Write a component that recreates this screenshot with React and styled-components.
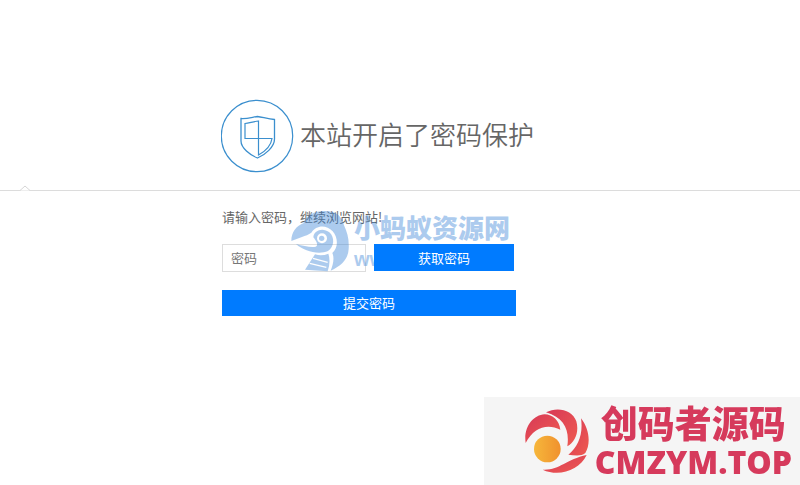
import React from "react";
import styled, { createGlobalStyle } from "styled-components";

const GlobalStyle = createGlobalStyle`
  * { box-sizing: border-box; }
  body {
    margin: 0;
    background: #fff;
    color: #666;
    font-family: "Noto Sans CJK SC", sans-serif;
    font-size: 13px;
  }
`;

const Page = styled.main`
  min-height: 100vh;
`;

const Header = styled.header`
  position: relative;
  padding: 99px 20px 17px;
  border-bottom: 1px solid #dcdcdc;
`;

const Notch = styled.svg`
  position: absolute;
  left: 20px;
  bottom: -1px;
  display: block;
`;

const Column = styled.div`
  width: 100%;
  max-width: 358px;
  margin: 0 auto;
`;

const Heading = styled(Column)`
  display: flex;
  align-items: center;
  gap: 6px;
`;

const Title = styled.h1`
  margin: 0;
  padding-bottom: 4px;
  color: #666;
  font-size: 26px;
  font-weight: 350;
  line-height: 40px;
  white-space: nowrap;
`;

const Body = styled.section`
  padding: 16px 20px;
`;

const Panel = styled(Column)`
  position: relative;
  padding-left: 1px;
`;

const Form = styled.form`
  max-width: 294px;
`;

const Prompt = styled.label`
  display: block;
  margin-bottom: 17px;
  line-height: 20px;
`;

const Row = styled.div`
  display: flex;
  gap: 8px;
  margin-bottom: 18px;
  padding-right: 2px;
`;

const PasswordInput = styled.input`
  flex: 1;
  min-width: 0;
  height: 28px;
  padding: 0 8px 2px;
  border: 1px solid #ddd;
  border-radius: 0;
  background: #fff;
  font: inherit;
  &::placeholder { color: #777; opacity: 1; }
`;

const Button = styled.button`
  position: relative;
  z-index: 2;
  width: ${({ $wide }) => ($wide ? "100%" : "140px")};
  height: ${({ $wide }) => ($wide ? "26px" : "27px")};
  padding: 0 0 1px;
  border: 0;
  background: #007bff;
  color: #fff;
  font: inherit;
  line-height: 25px;
`;

const Watermark = styled.div`
  position: absolute;
  z-index: 1;
  top: 1px;
  left: 69px;
  display: flex;
  gap: 4px;
  color: #3c86d8;
  opacity: 0.42;
  pointer-events: none;
`;

const WatermarkText = styled.div`
  font-size: 26px;
  font-weight: 900;
  line-height: 38px;
  white-space: nowrap;
`;

const WatermarkUrl = styled.div`
  font-family: "Liberation Sans", sans-serif;
  font-size: 20px;
  font-weight: 700;
  line-height: 26px;
`;

const Brand = styled.aside`
  position: fixed;
  right: 0;
  bottom: 0;
  display: flex;
  align-items: center;
  gap: 5px;
  padding: 4px 8px 4px 40px;
  background: #f5f5f5;
  color: #d63a5c;
  text-align: center;
  white-space: nowrap;
`;

const BrandName = styled.div`
  font-size: 37px;
  font-weight: 900;
  line-height: 42px;
`;

const BrandUrl = styled.div`
  font-family: "Open Sans", sans-serif;
  font-size: 32px;
  font-weight: 800;
  line-height: 38px;
`;

function ShieldIcon() {
  return (
    <svg width="73" height="74" viewBox="0 0 73 74" fill="none" stroke="#3b8fce" aria-hidden="true">
      <circle cx="36" cy="37" r="35.7" strokeWidth="1.2" />
      <path d="M20 19.500C26 20 32 18 36.500 17.500C41 18 47 20 53.500 20.500V40C53.500 48 44 56 36.500 59C29 56 20 49 20 42Z" strokeWidth="1.300" />
      <path d="M37.500 39.500V22C33 22.500 28 24 24 24.500V39.500H51C50 47 43 53 37.500 56V39.500" strokeWidth="1.200" />
    </svg>
  );
}

function AntLogo() {
  return (
    <svg width="60" height="64" viewBox="0 0 180 192" aria-hidden="true">
      <path
        fill="currentColor"
        d="M4 99C4 74 18 54 40 46C48 22 72 9 104 9C141 9 157 27 162 52C172 74 178 94 176 123C174 151 159 171 122 188C129 170 134 151 127 135C145 120 145 89 128 70C109 49 78 51 64 74C48 85 25 89 4 99Z"
      />
      <path fill="currentColor" d="M70 88C72 66 99 58 118 73C135 88 133 117 114 129C86 141 42 130 18 108C42 114 62 119 77 116C87 112 78 98 70 88Z" />
      <circle cx="96" cy="91" r="15" fill="#fff" />
      <circle cx="95" cy="91" r="8" fill="currentColor" />
      <path fill="currentColor" d="M75 139Q96 145 115 137Q123 160 113 190L45 185Z" />
      <path d="M69 151L113 163M59 166L109 178" stroke="#fff" strokeWidth="4" />
    </svg>
  );
}

function SwirlLogo() {
  return (
    <svg width="66" height="68" viewBox="0 0 198 204" aria-hidden="true">
      <defs>
        <linearGradient id="swirl" x1="0" y1="0" x2="1" y2="1">
          <stop offset="0" stopColor="#d73957" />
          <stop offset="1" stopColor="#ef5b50" />
        </linearGradient>
        <linearGradient id="sun">
          <stop offset="0" stopColor="#f6b73b" />
          <stop offset="1" stopColor="#f0912d" />
        </linearGradient>
      </defs>
      <g fill="url(#swirl)">
        <path d="M5 108C-2 62 26 24 62 22C86 23 106 40 109 68C70 48 29 61 5 108Z" />
        <path d="M66 16C99-2 146 8 157 43C166 76 153 105 130 118C137 69 121 33 66 16Z" />
        <path d="M171 34C196 65 201 110 184 138C171 149 151 145 133 143C163 119 178 80 171 34Z" />
        <path d="M188 144C166 190 105 211 56 188C105 191 126 157 188 144Z" />
      </g>
      <circle cx="70" cy="126" r="40" fill="url(#sun)" />
    </svg>
  );
}

export default function App() {
  return (
    <Page>
      <GlobalStyle />
      <Header>
        <Heading>
          <ShieldIcon />
          <Title>本站开启了密码保护</Title>
        </Heading>
        <Notch width="10" height="6" viewBox="0 0 10 6" aria-hidden="true">
          <path d="M0 5.500L5 1L10 5.500" fill="#fff" stroke="#d6d6d6" />
        </Notch>
      </Header>
      <Body>
        <Panel>
          <Form onSubmit={(event) => event.preventDefault()}>
            <Prompt htmlFor="password">请输入密码，继续浏览网站!</Prompt>
            <Row>
              <PasswordInput id="password" type="password" placeholder="密码" />
              <Button type="button">获取密码</Button>
            </Row>
            <Button type="submit" $wide>提交密码</Button>
          </Form>
          <Watermark>
            <AntLogo />
            <div>
              <WatermarkText>小蚂蚁资源网</WatermarkText>
              <WatermarkUrl>www.</WatermarkUrl>
            </div>
          </Watermark>
        </Panel>
      </Body>
      <Brand>
        <SwirlLogo />
        <div>
          <BrandName>创码者源码</BrandName>
          <BrandUrl>CMZYM.TOP</BrandUrl>
        </div>
      </Brand>
    </Page>
  );
}
